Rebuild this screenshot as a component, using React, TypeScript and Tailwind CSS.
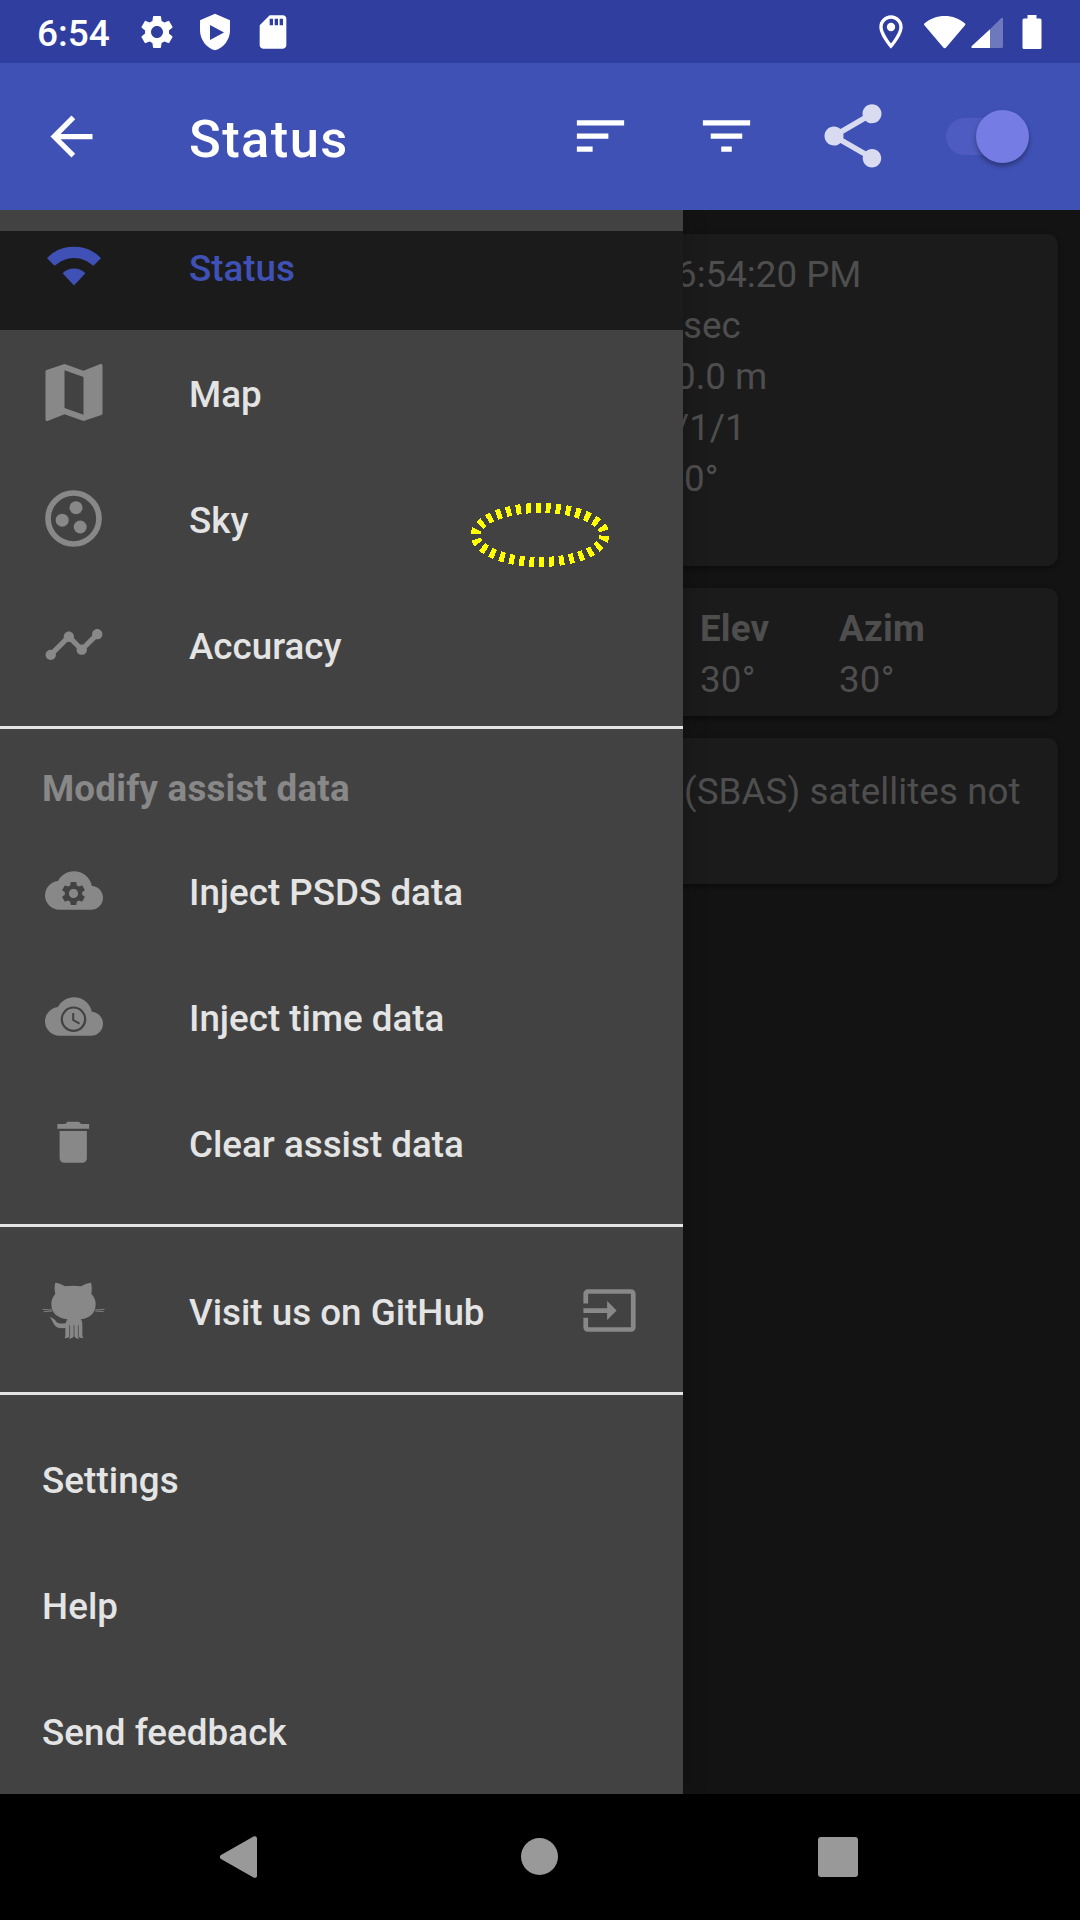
import type { ReactNode } from "react";
import {
  MdArrowBack,
  MdCloud,
  MdDelete,
  MdFilterList,
  MdInput,
  MdMap,
  MdOutlineLocationOn,
  MdSdCard,
  MdSettings,
  MdShare,
  MdShield,
  MdSort,
  MdTimeline,
} from "react-icons/md";

function StatusBar() {
  return (
    <div className="flex h-[63px] items-center bg-[#303e9f] text-white">
      <span className="ml-[37px] w-[100px] pt-[4px] text-[37px] leading-[60px] font-medium">6:54</span>
      <MdSettings className="size-10" />
      <div className="relative ml-[18px] size-10">
        <MdShield className="size-10" />
        <svg viewBox="0 0 40 40" className="absolute inset-0 size-10">
          <path d="M15 13v15l14-7.5z" fill="#303e9f" />
        </svg>
      </div>
      <MdSdCard className="ml-[18px] size-10" />
      <div className="ml-auto flex items-center">
        <MdOutlineLocationOn className="size-10" />
        <svg viewBox="0 0 42 34" className="ml-[13px] h-[34px] w-[42px]" fill="currentColor">
          <path d="M.6 8.3C6 3.600 13 1 20.700 1s14.700 2.600 20.100 7.300c.7.600.7 1.200.2 1.900L22.300 32.300c-1 1.200-2.200 1.200-3.200 0L.4 10.200c-.5-.7-.5-1.300.2-1.900z" />
        </svg>
        <svg viewBox="0 0 32 34" className="ml-[5px] h-[34px] w-8" fill="currentColor">
          <path d="M19 14.300 29.800 3.400c1-1 2.200-.6 2.200.8V31.500a1.500 1.500 0 0 1-1.500 1.500H19z" opacity=".3" />
          <path d="M19 14.300V33H1.500C0 33 0 31.800.8 31z" />
        </svg>
        <svg viewBox="0 0 20 34" className="mr-[38px] ml-[19px] h-[34px] w-5" fill="currentColor">
          <path d="M5.500 0h9v3.500H18a1.500 1.500 0 0 1 1.500 1.500v27.500A1.500 1.500 0 0 1 18 34H2A1.500 1.500 0 0 1 .5 32.500V5A1.500 1.500 0 0 1 2 3.500h3.500z" />
        </svg>
      </div>
    </div>
  );
}

function Toolbar() {
  return (
    <div className="flex h-[147px] items-center bg-[#3f51b5] pb-px text-white">
      <MdArrowBack className="ml-[39.5px] size-[63px]" />
      <h1 className="ml-[86.5px] pt-[5px] text-[52.5px] leading-[62px] font-medium tracking-[1.4px]">Status</h1>
      <MdSort className="ml-auto size-[63px] -translate-y-[0.500px]" />
      <MdFilterList className="ml-[63px] size-[63px] -translate-y-[0.500px]" />
      <MdShare className="ml-[57px] size-[76px] text-[#d9dcf0]" />
      <div className="relative mr-[51px] ml-[54px] flex h-[53px] w-[84px] items-center">
        <div className="ml-px h-[37px] w-[73px] rounded-full bg-[#4e5cc1]" />
        <div className="absolute top-0 right-0 size-[53px] rounded-full bg-[#757de4] shadow-[0_3px_5px_rgba(0,0,0,0.35)]" />
      </div>
    </div>
  );
}

function Row({ icon, label, end }: { icon: ReactNode; label: string; end?: ReactNode }) {
  return (
    <div className="flex h-[126px] items-center">
      <div className="relative mr-[77.5px] mb-px ml-[35.5px] flex size-[76px] items-center justify-center text-[#888]">
        {icon}
      </div>
      <span className="pt-[2px]">{label}</span>
      {end}
    </div>
  );
}

function PlainRow({ label }: { label: string }) {
  return <div className="flex h-[126px] items-center pt-[2px] pl-[42px] tracking-[0.08px]">{label}</div>;
}

function StatusIcon() {
  return (
    <svg
      viewBox="0 0 54 40"
      preserveAspectRatio="none"
      className="h-[39px] w-[54px] -translate-y-[1.500px]"
      fill="currentColor"
    >
      <path d="M0 12C7 4.500 16.500 0 27 0s20 4.500 27 12l-7.600 7.800C41 15 34.500 11.700 27 11.700S13 15 7.600 19.800z" />
      <path d="M15.600 27.500c3-3.200 6.700-4.900 11.400-4.900s8.400 1.700 11.400 4.900L27 40z" />
    </svg>
  );
}

function SkyIcon() {
  return (
    <svg viewBox="0 0 57 57" className="size-[57px]" fill="currentColor">
      <circle cx="28.500" cy="28.500" r="25.500" fill="none" stroke="currentColor" strokeWidth="5.700" />
      <circle cx="31" cy="17.700" r="6.500" />
      <circle cx="17.200" cy="30.200" r="6.500" />
      <circle cx="35.200" cy="37" r="6.500" />
    </svg>
  );
}

function CloudSettings() {
  return (
    <>
      <MdCloud className="size-[58px] -translate-y-[1.500px]" />
      <MdSettings className="absolute top-[25px] left-[23.500px] size-[29px] text-[#424242]" />
      <span className="absolute top-[35px] left-[33.500px] size-[9px] rounded-full bg-[#888]" />
    </>
  );
}

function CloudClock() {
  return (
    <>
      <MdCloud className="size-[58px] -translate-y-[1.500px]" />
      <svg viewBox="0 0 28 28" className="absolute top-[25px] left-[24.500px] size-7" fill="none" stroke="#424242">
        <circle cx="13.500" cy="14.200" r="11.700" strokeWidth="2.200" />
        <path d="M13.200 8v7l6.300 3.700" strokeWidth="2" />
      </svg>
    </>
  );
}

function Octocat() {
  return (
    <svg viewBox="0 0 228 210" className="h-[70px] w-[76px] shrink-0 -translate-y-px" fill="currentColor">
      <path d="M58 20C70 22 80 26 87 31Q111 28 136 31C144 25 154 22 165 20C168 31 168 42 166 53C175 63 179 72 179 84C179 112 162 126 134 130C138 134 139 140 139 146V178C139 181 140 184 143 186C136 187 130 185 128 181C126 184 128 186 129 188C122 188 117 186 114 180C111 186 106 188 99 188C101 186 102 184 100 181C98 185 93 187 85 186C88 184 88 181 88 178V156C69 158 59 154 53 143C49 134 46 129 41 123C50 125 56 130 61 137C68 144 77 143 89 142C90 136 92 133 95 130C64 126 46 112 46 84C46 72 50 63 58 53C55 42 55 31 58 20Z" />
      <path d="M101 148v34M114 148v34M127 148v34" stroke="#424242" strokeWidth="3" opacity=".75" />
      <path d="M20 100l28 2M23 107l26-2M178 102l28-2M178 105l25 2" stroke="currentColor" strokeWidth="2.500" fill="none" />
    </svg>
  );
}

function Divider() {
  return <div className="h-[3px] bg-[#e4e4e4]" />;
}

function Drawer() {
  return (
    <nav className="absolute top-0 left-0 h-full w-[683px] overflow-hidden bg-[#424242] pt-[21px] text-[36.75px] leading-[44px] font-medium text-[#e4e4e4] shadow-[0_0_24px_rgba(0,0,0,0.2)]">
      <div className="flex h-[99px] items-center bg-[#1b1b1b] pb-[27px] text-[#3f51b5]">
        <div className="mr-[77.5px] ml-[35.5px] flex w-[76px] justify-center">
          <StatusIcon />
        </div>
        <span className="pt-[4px]">Status</span>
      </div>
      <div className="[&_span]:pt-[3px]">
        <Row icon={<MdMap className="size-[76px] shrink-0 -translate-y-[0.500px]" />} label="Map" />
        <Row icon={<SkyIcon />} label="Sky" />
        <Row icon={<MdTimeline className="size-[62px] -translate-y-[0.500px]" />} label="Accuracy" />
      </div>
      <div className="mt-[18px]">
        <Divider />
      </div>
      <div className="flex h-[100px] items-center pt-[19px] pl-[42px] font-bold tracking-[0.2px] text-[#888]">
        Modify assist data
      </div>
      <Row icon={<CloudSettings />} label="Inject PSDS data" />
      <Row icon={<CloudClock />} label="Inject time data" />
      <Row icon={<MdDelete className="size-[54.500px] -translate-y-px" />} label="Clear assist data" />
      <div className="mt-[17px] mb-[22px]">
        <Divider />
      </div>
      <Row
        icon={<Octocat />}
        label="Visit us on GitHub"
        end={<MdInput className="mr-[45px] ml-auto size-[57px] -translate-y-[2px] text-[#888]" />}
      />
      <div className="mt-[17px] mb-[22px]">
        <Divider />
      </div>
      <PlainRow label="Settings" />
      <PlainRow label="Help" />
      <PlainRow label="Send feedback" />
      <svg
        viewBox="0 0 140 64"
        className="absolute top-[293px] left-[469.500px] h-16 w-[140px]"
        fill="none"
        shapeRendering="crispEdges"
      >
        <ellipse
          cx="70"
          cy="32"
          rx="64.500"
          ry="27"
          pathLength="300"
          stroke="#ff0"
          strokeWidth="10"
          strokeDasharray="5 5"
          strokeDashoffset="-0.8"
        />
      </svg>
    </nav>
  );
}

function StatusCards() {
  return (
    <div className="flex flex-col gap-[22px] pt-[24px] pr-[22px] pl-[22px] text-[36.75px] leading-[51px] text-[#4e4e4e]">
      <section className="h-[332px] rounded-[11px] bg-[#1b1b1b] pt-[15px] shadow-[0_2px_5px_rgba(0,0,0,0.4)]">
        <p className="pl-[654px]">6:54:20 PM</p>
        <p className="pl-[661px]">sec</p>
        <p className="pl-[653px]">0.0 m</p>
        <p className="pl-[652px]">/1/1</p>
        <p className="pl-[662px]">0°</p>
      </section>
      <section className="grid h-[128px] grid-cols-[139px_1fr] content-start rounded-[11px] bg-[#1b1b1b] pt-[15px] pl-[678px] tracking-[0.2px] shadow-[0_2px_5px_rgba(0,0,0,0.4)]">
        <b>Elev</b>
        <b>Azim</b>
        <span>30°</span>
        <span>30°</span>
      </section>
      <section className="h-[146px] rounded-[11px] bg-[#1b1b1b] pt-[28px] pl-[662px] tracking-[0.07px] whitespace-nowrap shadow-[0_2px_5px_rgba(0,0,0,0.4)]">
        (SBAS) satellites not
      </section>
    </div>
  );
}

function NavigationBar() {
  return (
    <div className="flex h-[126px] items-center bg-black text-[#999]">
      <svg viewBox="0 0 38 42" className="ml-[220px] h-[42px] w-[38px]" fill="currentColor">
        <path d="M1 19 33.500.6C35.500-.5 37 .5 37 2.500v37c0 2-1.500 3-3.500 1.900L1 23c-1.500-1-1.500-3 0-4z" />
      </svg>
      <div className="mb-px ml-[263px] size-[37px] rounded-full bg-current" />
      <div className="ml-[260px] size-10 rounded-[3px] bg-current" />
    </div>
  );
}

export default function App() {
  return (
    <div className="flex h-[1920px] w-[1080px] flex-col overflow-hidden bg-[#131313] font-[Roboto,sans-serif]">
      <StatusBar />
      <Toolbar />
      <main className="relative h-[1584px] overflow-hidden">
        <StatusCards />
        <Drawer />
      </main>
      <NavigationBar />
    </div>
  );
}
